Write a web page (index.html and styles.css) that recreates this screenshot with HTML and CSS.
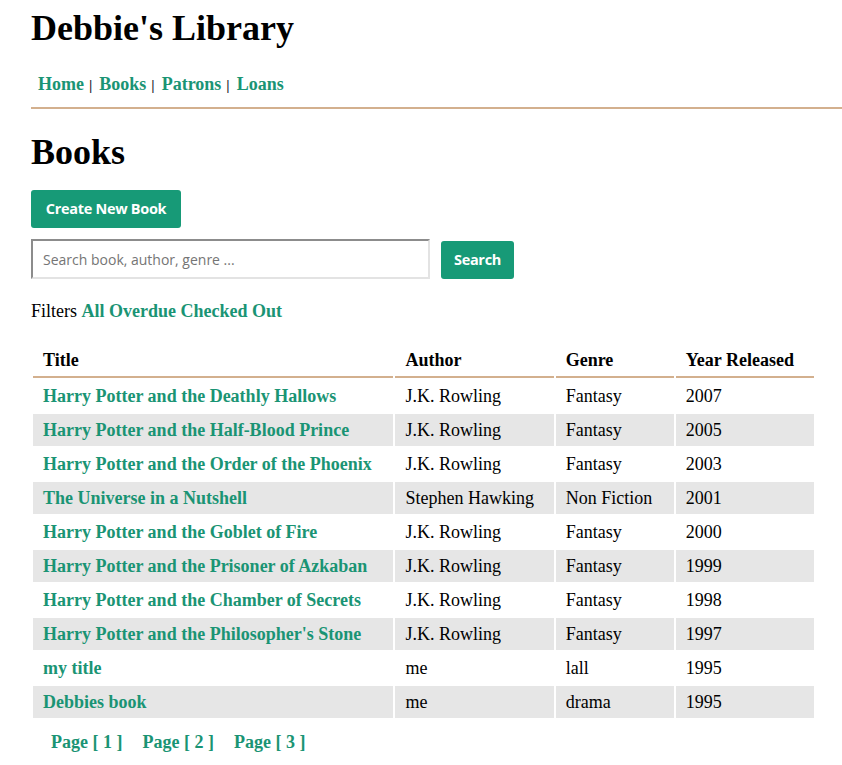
FILE: index.html
```html
<!DOCTYPE html>
<html lang="en">
<head>
<meta charset="utf-8">
<title>Books - Debbie's Library</title>
<link rel="stylesheet" href="styles.css">
</head>
<body>
<header class="site-header">
  <h1 class="site-title">Debbie's Library</h1>
  <nav class="main-nav">
    <a href="#">Home</a><span class="sep">|</span><a href="#">Books</a><span class="sep">|</span><a href="#">Patrons</a><span class="sep">|</span><a href="#">Loans</a>
  </nav>
</header>
<main class="content">
  <h2 class="page-title">Books</h2>
  <div class="actions">
    <a class="btn btn-create" href="#">Create New Book</a>
  </div>
  <form class="search-form">
    <input class="search-input" type="text" placeholder="Search book, author, genre ...">
    <button class="btn btn-search" type="button">Search</button>
  </form>
  <p class="filters">Filters <a href="#">All</a> <a href="#">Overdue</a> <a href="#">Checked Out</a></p>
  <table class="books">
    <thead>
      <tr>
        <th class="col-title">Title</th>
        <th class="col-author">Author</th>
        <th class="col-genre">Genre</th>
        <th class="col-year">Year Released</th>
      </tr>
    </thead>
    <tbody>
      <tr><td><a href="#">Harry Potter and the Deathly Hallows</a></td><td>J.K. Rowling</td><td>Fantasy</td><td>2007</td></tr>
      <tr><td><a href="#">Harry Potter and the Half-Blood Prince</a></td><td>J.K. Rowling</td><td>Fantasy</td><td>2005</td></tr>
      <tr><td><a href="#">Harry Potter and the Order of the Phoenix</a></td><td>J.K. Rowling</td><td>Fantasy</td><td>2003</td></tr>
      <tr><td><a href="#">The Universe in a Nutshell</a></td><td>Stephen Hawking</td><td>Non Fiction</td><td>2001</td></tr>
      <tr><td><a href="#">Harry Potter and the Goblet of Fire</a></td><td>J.K. Rowling</td><td>Fantasy</td><td>2000</td></tr>
      <tr><td><a href="#">Harry Potter and the Prisoner of Azkaban</a></td><td>J.K. Rowling</td><td>Fantasy</td><td>1999</td></tr>
      <tr><td><a href="#">Harry Potter and the Chamber of Secrets</a></td><td>J.K. Rowling</td><td>Fantasy</td><td>1998</td></tr>
      <tr><td><a href="#">Harry Potter and the Philosopher's Stone</a></td><td>J.K. Rowling</td><td>Fantasy</td><td>1997</td></tr>
      <tr><td><a href="#">my title</a></td><td>me</td><td>lall</td><td>1995</td></tr>
      <tr><td><a href="#">Debbies book</a></td><td>me</td><td>drama</td><td>1995</td></tr>
    </tbody>
  </table>
  <nav class="pagination">
    <a href="#">Page [ 1 ]</a>
    <a href="#">Page [ 2 ]</a>
    <a href="#">Page [ 3 ]</a>
  </nav>
</main>
</body>
</html>
```
FILE: styles.css
```css
html, body {
  margin: 0;
  padding: 0;
  background: #ffffff;
}

body {
  font-family: "Liberation Serif", "Times New Roman", serif;
  font-size: 18px;
  color: #000000;
  padding: 8px 0 0 31px;
}

a {
  color: #1a9474;
  font-weight: bold;
  text-decoration: none;
}

.site-title {
  font-size: 36px;
  font-weight: bold;
  margin: 0;
  line-height: 40px;
}

.main-nav {
  margin-top: 26px;
  padding-bottom: 11px;
  border-bottom: 2px solid #d3b08e;
  line-height: 21px;
}

.main-nav a {
  padding: 0 5px 0 7px;
}

.main-nav .sep {
  font-size: 15px;
  font-weight: bold;
  color: #1c1c2e;
}

.page-title {
  font-size: 36px;
  font-weight: bold;
  margin: 23px 0 0;
  line-height: 40px;
}

.actions {
  margin-top: 18px;
  display: flex;
}

.btn {
  display: inline-block;
  box-sizing: border-box;
  background: #179a77;
  color: #ffffff;
  font-family: "Open Sans", "Noto Sans", sans-serif;
  font-weight: 700;
  font-size: 14.5px;
  letter-spacing: -0.3px;
  border: none;
  border-radius: 3px;
  height: 38px;
  line-height: 38px;
  padding: 0;
  text-align: center;
  white-space: nowrap;
}

.btn-create {
  width: 150px;
}

.search-form {
  display: flex;
  align-items: flex-end;
  gap: 11px;
  margin-top: 11px;
}

.search-input {
  box-sizing: border-box;
  width: 399px;
  height: 40px;
  margin: 0;
  padding: 0 10px;
  border-style: solid;
  border-width: 2px;
  border-color: #8c8c8c #e3e3e3 #e3e3e3 #8c8c8c;
  font-family: "Open Sans", "Noto Sans", sans-serif;
  font-size: 14px;
  color: #333;
  background: #fff;
  outline: none;
}

.search-input::placeholder {
  color: #757575;
}

.btn-search {
  width: 73px;
}

.filters {
  margin: 22px 0 0;
  line-height: 20px;
}

.books {
  margin-top: 21px;
  border-collapse: separate;
  border-spacing: 2px;
  width: 785px;
  table-layout: fixed;
}

.books th,
.books td {
  text-align: left;
  padding: 6px 10px;
  line-height: 20px;
  font-size: 18px;
}

.books th {
  border-bottom: 2px solid #d3b08e;
  font-weight: bold;
}

.col-title { width: 340px; }
.col-author { width: 138px; }
.col-genre { width: 98px; }
.col-year { width: 118px; }

.books tbody tr:nth-child(even) td {
  background: #e6e6e6;
}

.pagination {
  margin-top: 12px;
  padding-left: 20px;
  line-height: 20px;
  display: flex;
  gap: 20px;
}
```
